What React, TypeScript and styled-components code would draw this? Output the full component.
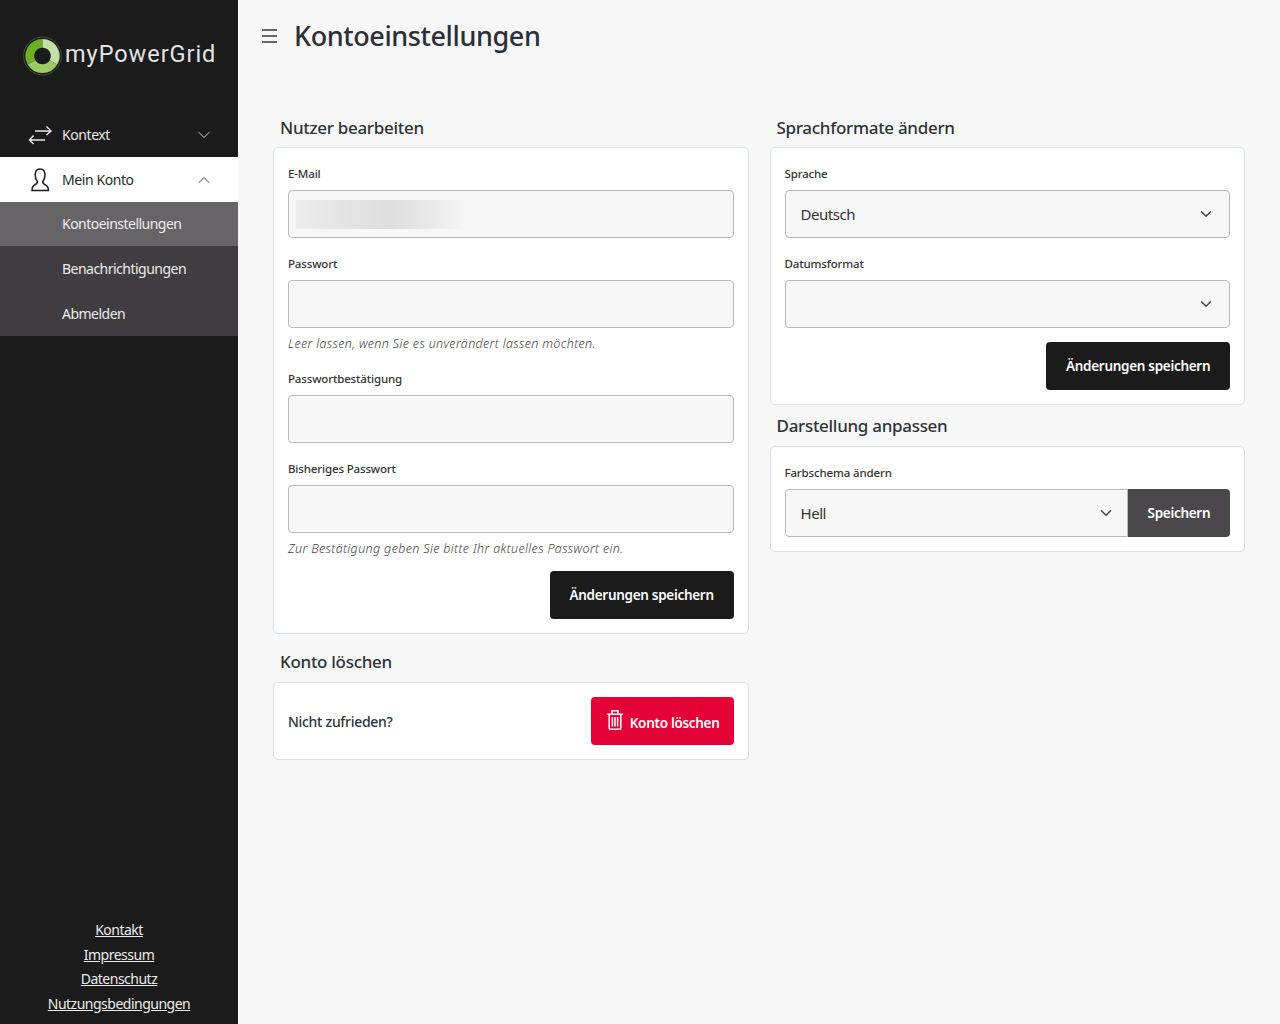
// App.tsx
import React from 'react';
import styled, { createGlobalStyle } from 'styled-components';
import { ChevronDown, ChevronUp } from 'lucide-react';

const GlobalStyle = createGlobalStyle`
  html, body {
    margin: 0;
    height: 100%;
    background: #f7f7f7;
  }
  body {
    font-family: "Noto Sans", "Open Sans", "Liberation Sans", sans-serif;
    color: #2f3337;
  }
  * {
    box-sizing: border-box;
  }
`;

// Layout
const Page = styled.div`
  display: flex;
  height: 1024px;
  overflow: hidden;
`;

const Sidebar = styled.aside`
  width: 238px;
  flex: none;
  display: flex;
  flex-direction: column;
  background: #1b1b1b;
`;

const Brand = styled.div`
  height: 112px;
  display: flex;
  align-items: flex-start;
  gap: 3px;
  padding: 36px 0 0 23px;
`;

const BrandName = styled.span`
  font-family: Roboto, "Noto Sans", sans-serif;
  font-size: 23.5px;
  line-height: 36px;
  letter-spacing: 0.95px;
  color: #e4e4e4;
`;

const NavRow = styled.div<{ $open?: boolean }>`
  height: 45px;
  display: flex;
  align-items: center;
  padding: 0 24px 0 28px;
  font-size: 14px;
  letter-spacing: -0.42px;
  background: ${(p) => (p.$open ? '#ffffff' : 'transparent')};
  color: ${(p) => (p.$open ? '#2b2b2b' : '#e8e8e8')};
`;

const NavIcon = styled.span`
  width: 34px;
  flex: none;
  display: flex;
`;

const NavLabel = styled.span`
  flex: 1;
`;

const SubNav = styled.div`
  background: #3f3d40;
`;

const SubItem = styled.div<{ $active?: boolean }>`
  height: ${(p) => (p.$active ? 44 : 45)}px;
  display: flex;
  align-items: center;
  padding-left: 62px;
  padding-bottom: ${(p) => (p.$active ? 1 : 0)}px;
  font-size: 14px;
  letter-spacing: -0.52px;
  color: #ececec;
  background: ${(p) => (p.$active ? '#666467' : 'transparent')};
`;

const FooterLinks = styled.nav`
  margin-top: auto;
  padding-bottom: 7.4px;
  display: flex;
  flex-direction: column;
  align-items: center;
`;

const FooterLink = styled.a`
  font-size: 14px;
  line-height: 24.6px;
  letter-spacing: -0.5px;
  color: #ececec;
  text-decoration: underline;
`;

const Main = styled.main`
  flex: 1;
  padding: 0 35px;
`;

const Header = styled.header`
  height: 71px;
  display: flex;
  align-items: center;
  margin-left: -11px;
  gap: 17px;
`;

const MenuButton = styled.span`
  display: flex;
  width: 15px;
`;

const PageTitle = styled.h1`
  margin: 0;
  font-size: 27px;
  line-height: 40px;
  font-weight: 500;
  color: #2b3036;
  letter-spacing: -0.4px;
`;

const Columns = styled.div`
  display: grid;
  grid-template-columns: 1fr 1fr;
  column-gap: 21px;
  align-items: start;
  padding-top: 42px;
`;

const Column = styled.div`
  display: flex;
  flex-direction: column;
`;

const SectionTitle = styled.h2<{ $gap: number; $after: number }>`
  margin: ${(p) => p.$gap}px 0 ${(p) => p.$after}px;
  padding-left: 7px;
  font-size: 17px;
  line-height: 28px;
  font-weight: 500;
  letter-spacing: -0.3px;
  color: #2f3337;
`;

const Card = styled.section<{ $even?: boolean }>`
  background: #ffffff;
  border: 1px solid #d8e2ec;
  border-radius: 5px;
  padding: ${(p) => (p.$even ? '14px' : '15px 14px 14px')};
`;

const Field = styled.div`
  margin-bottom: 15px;
`;

const Label = styled.label`
  display: block;
  height: 21px;
  margin-bottom: 6px;
  font-size: 11.5px;
  line-height: 21px;
  font-weight: 500;
  letter-spacing: -0.15px;
  color: #333;
`;

const TextInput = styled.input`
  display: block;
  width: 100%;
  height: 48px;
  background: #f7f7f7;
  border: 1px solid #b9b9b9;
  border-radius: 4px;
  outline: none;
`;

const FilledInput = styled.div`
  height: 48px;
  padding: 9px 7px;
  background: #f7f7f7;
  border: 1px solid #b9b9b9;
  border-radius: 4px;
`;

const Redacted = styled.div`
  width: 170px;
  height: 29px;
  background: linear-gradient(90deg, #ececec 0%, #e4e4e4 30%, #dedede 55%, #e9e9e9 80%, #f7f7f7 100%);
`;

const Hint = styled.p`
  margin: 5px 0 -1px;
  font-size: 12.5px;
  line-height: 21px;
  font-style: italic;
  font-weight: 300;
  letter-spacing: 0.35px;
  color: #444;
`;

const SelectBox = styled.div<{ $joined?: boolean }>`
  flex: 1;
  height: 48px;
  display: flex;
  align-items: center;
  justify-content: space-between;
  padding: 0 ${(p) => (p.$joined ? 12 : 14)}px 0 15px;
  background: #f7f7f7;
  border: 1px solid #b9b9b9;
  border-radius: ${(p) => (p.$joined ? '4px 0 0 4px' : '4px')};
  font-size: 15px;
  letter-spacing: -0.45px;
  color: #333;
`;

const Actions = styled.div<{ $top: number }>`
  display: flex;
  justify-content: flex-end;
  margin-top: ${(p) => p.$top}px;
`;

const Button = styled.button<{ $variant?: 'dark' | 'grey' | 'danger' }>`
  height: 48px;
  display: inline-flex;
  align-items: center;
  justify-content: center;
  gap: 6px;
  padding: 0 19.8px;
  border: none;
  border-radius: ${(p) => (p.$variant === 'grey' ? '0 4px 4px 0' : '4px')};
  font-family: inherit;
  font-size: 13.5px;
  font-weight: 600;
  letter-spacing: -0.3px;
  color: #ffffff;
  background: ${(p) =>
    p.$variant === 'danger' ? '#e40135' : p.$variant === 'grey' ? '#4a484b' : '#1b1b1b'};
`;

const DangerButton = styled(Button)`
  gap: 7px;
  padding: 0 14px 0 16px;

  svg {
    margin-top: -3px;
  }

  span {
    margin-top: 3px;
  }
`;

const DeleteRow = styled.div`
  display: flex;
  align-items: center;
  justify-content: space-between;
  font-size: 14px;
  font-weight: 500;
  letter-spacing: -0.3px;
`;

const InputGroup = styled.div`
  display: flex;
`;

// Drawings
const LogoMark = () => (
  <svg width="39" height="40" viewBox="0 0 40 40">
    <circle cx="20" cy="20" r="19.4" fill="#1b1b1b" stroke="#41562a" strokeWidth="1" />
    <path d="M20 2.5 A17.5 17.5 0 0 0 4.84 28.75 L12.64 24.25 A8.5 8.5 0 0 1 20 11.5 Z" fill="#6cae24" />
    <path d="M20 2.5 A17.5 17.5 0 0 1 35.16 28.75 L27.36 24.25 A8.5 8.5 0 0 0 20 11.5 Z" fill="#c6dea8" />
    <path d="M4.84 28.75 A17.5 17.5 0 0 0 35.16 28.75 L27.36 24.25 A8.5 8.5 0 0 1 12.64 24.25 Z" fill="#9dcb63" />
  </svg>
);

const SwitchIcon = () => (
  <svg width="24" height="20" viewBox="0 0 24 20" fill="none" stroke="#e8e8e8" strokeWidth="1.4">
    <path d="M7 6 H23 M18.5 1.5 L23 6 L18.5 10" />
    <path d="M17 15 H1.5 M5.5 10.5 L1.5 15 L5.5 19" />
  </svg>
);

const UserIcon = () => (
  <svg width="24" height="24" viewBox="-2 0 24 24" fill="none" stroke="#1b1b1b" strokeWidth="1.5">
    <path d="M10 1 C6.5 1 5.2 3.8 5.2 7 C5.2 10 6.2 12 7.4 13.4 C7.6 15 6.6 16 4.5 17 C2.2 18 2 20 2 22.6 H18.4 C18.4 20 18 18 15.6 17 C13.5 16 12.5 15 12.8 13.4 C14 12 15 10 15 7 C15 3.8 13.5 1 10 1 Z" />
  </svg>
);

const MenuIcon = () => (
  <svg width="15" height="14" viewBox="0 0 15 14" stroke="#33383d" strokeWidth="1.4">
    <path d="M0 1 H15 M0 7 H15 M0 13 H15" />
  </svg>
);

const TrashIcon = () => (
  <svg width="16" height="20" viewBox="0 0 16 20" fill="none" stroke="#ffffff" strokeWidth="1.5">
    <path d="M0 4.2 H16 M5 4.2 V0.8 H11 V4.2" />
    <path d="M2.2 4.2 V18.2 Q2.2 19.2 3.2 19.2 H12.8 Q13.8 19.2 13.8 18.2 V4.2" />
    <path d="M5.4 7 V16.4 M8 7 V16.4 M10.6 7 V16.4" />
  </svg>
);

const App: React.FC = () => {
  return (
    <Page>
      <GlobalStyle />
      <Sidebar>
        <Brand>
          <LogoMark />
          <BrandName>myPowerGrid</BrandName>
        </Brand>
        <NavRow>
          <NavIcon><SwitchIcon /></NavIcon>
          <NavLabel>Kontext</NavLabel>
          <ChevronDown size={20} strokeWidth={1.1} color="#e8e8e8" />
        </NavRow>
        <NavRow $open>
          <NavIcon><UserIcon /></NavIcon>
          <NavLabel>Mein Konto</NavLabel>
          <ChevronUp size={20} strokeWidth={1.1} color="#333" />
        </NavRow>
        <SubNav>
          <SubItem $active>Kontoeinstellungen</SubItem>
          <SubItem>Benachrichtigungen</SubItem>
          <SubItem>Abmelden</SubItem>
        </SubNav>
        <FooterLinks>
          <FooterLink>Kontakt</FooterLink>
          <FooterLink>Impressum</FooterLink>
          <FooterLink>Datenschutz</FooterLink>
          <FooterLink>Nutzungsbedingungen</FooterLink>
        </FooterLinks>
      </Sidebar>
      <Main>
        <Header>
          <MenuButton><MenuIcon /></MenuButton>
          <PageTitle>Kontoeinstellungen</PageTitle>
        </Header>
        <Columns>
          <Column>
            <SectionTitle $gap={1} $after={5}>Nutzer bearbeiten</SectionTitle>
            <Card>
              <Field>
                <Label>E-Mail</Label>
                <FilledInput><Redacted /></FilledInput>
              </Field>
              <Field>
                <Label>Passwort</Label>
                <TextInput type="password" />
                <Hint>Leer lassen, wenn Sie es unverändert lassen möchten.</Hint>
              </Field>
              <Field>
                <Label>Passwortbestätigung</Label>
                <TextInput type="password" />
              </Field>
              <Field>
                <Label>Bisheriges Passwort</Label>
                <TextInput type="password" />
                <Hint>Zur Bestätigung geben Sie bitte Ihr aktuelles Passwort ein.</Hint>
              </Field>
              <Actions $top={-3}>
                <Button>Änderungen speichern</Button>
              </Actions>
            </Card>
            <SectionTitle $gap={14} $after={6}>Konto löschen</SectionTitle>
            <Card $even>
              <DeleteRow>
                Nicht zufrieden?
                <DangerButton $variant="danger"><TrashIcon /><span>Konto löschen</span></DangerButton>
              </DeleteRow>
            </Card>
          </Column>
          <Column>
            <SectionTitle $gap={1} $after={5}>Sprachformate ändern</SectionTitle>
            <Card>
              <Field>
                <Label>Sprache</Label>
                <InputGroup>
                  <SelectBox>Deutsch<ChevronDown size={18} strokeWidth={2} color="#3d4450" /></SelectBox>
                </InputGroup>
              </Field>
              <Field>
                <Label>Datumsformat</Label>
                <InputGroup>
                  <SelectBox><span /><ChevronDown size={18} strokeWidth={2} color="#3d4450" /></SelectBox>
                </InputGroup>
              </Field>
              <Actions $top={-1}>
                <Button>Änderungen speichern</Button>
              </Actions>
            </Card>
            <SectionTitle $gap={7} $after={6}>Darstellung anpassen</SectionTitle>
            <Card>
              <Label>Farbschema ändern</Label>
              <InputGroup>
                <SelectBox $joined>Hell<ChevronDown size={18} strokeWidth={2} color="#3d4450" /></SelectBox>
                <Button $variant="grey">Speichern</Button>
              </InputGroup>
            </Card>
          </Column>
        </Columns>
      </Main>
    </Page>
  );
};

export default App;
